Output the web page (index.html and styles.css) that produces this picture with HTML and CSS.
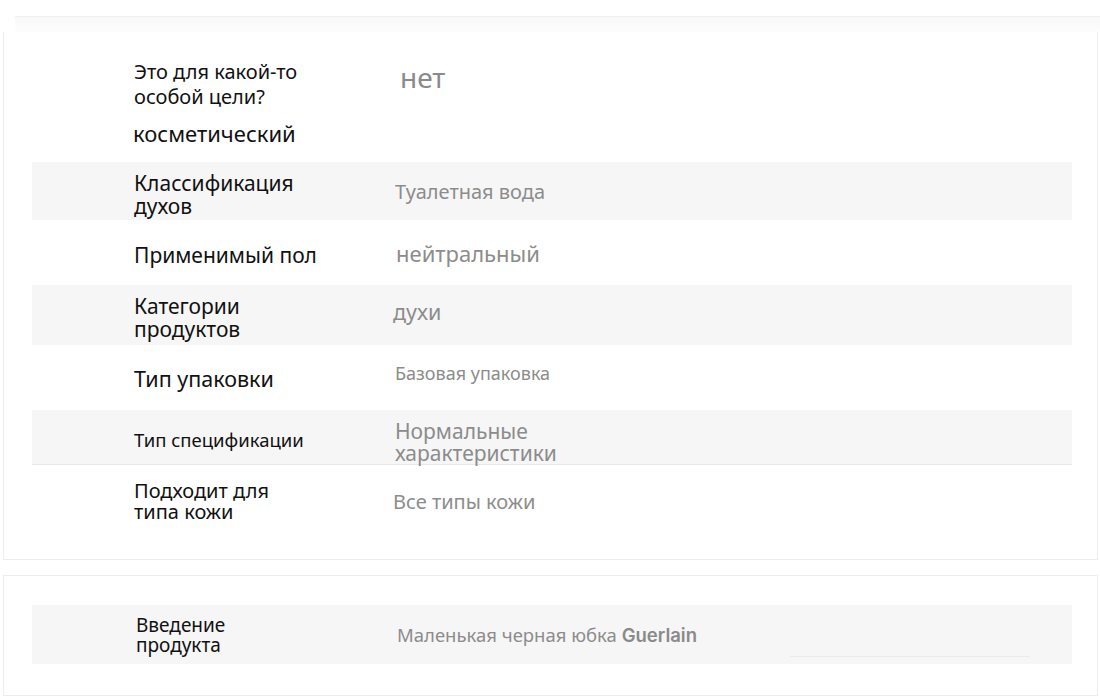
FILE: index.html
```html
<!DOCTYPE html>
<html lang="ru">
<head>
<meta charset="utf-8">
<link rel="stylesheet" href="styles.css">
</head>
<body>
<div class="topbar"></div>
<section class="card card-main">
  <div class="row r1">
    <div class="label">Это для какой-то<br>особой цели?</div>
    <div class="value">нет</div>
  </div>
  <div class="extra">косметический</div>
  <div class="row band r2">
    <div class="label">Классификация<br>духов</div>
    <div class="value">Туалетная вода</div>
  </div>
  <div class="row r3">
    <div class="label">Применимый пол</div>
    <div class="value">нейтральный</div>
  </div>
  <div class="row band r4">
    <div class="label">Категории<br>продуктов</div>
    <div class="value">духи</div>
  </div>
  <div class="row r5">
    <div class="label">Тип упаковки</div>
    <div class="value">Базовая упаковка</div>
  </div>
  <div class="row band r6">
    <div class="label">Тип спецификации</div>
    <div class="value">Нормальные<br>характеристики</div>
  </div>
  <div class="row r7">
    <div class="label">Подходит для<br>типа кожи</div>
    <div class="value">Все типы кожи</div>
  </div>
</section>
<section class="card card-intro">
  <div class="row band r8">
    <div class="label">Введение<br>продукта</div>
    <div class="value">Маленькая черная юбка <span class="brand">Guerlain</span></div>
    <div class="underline"></div>
  </div>
</section>
</body>
</html>
```
FILE: styles.css
```css
html, body {
  margin: 0;
  padding: 0;
  background: #ffffff;
}
body {
  font-family: "Noto Sans", "Open Sans", "DejaVu Sans", sans-serif;
  color: #111111;
  width: 1100px;
  height: 698px;
  overflow: hidden;
}
.topbar {
  margin-top: 16px;
  margin-left: 15px;
  height: 15px;
  border-top: 1px solid #efefef;
  background: linear-gradient(#f8f8f8, #fdfdfd);
}
.card {
  margin-left: 3px;
  width: 1095px;
  border: 1px solid #ededed;
  box-sizing: border-box;
}
.card-main {
  border-top: none;
  height: 528px;
}
.card-intro {
  margin-top: 15px;
  height: 121px;
  padding-top: 29px;
}
.row {
  position: relative;
  display: flex;
  align-items: flex-start;
  margin-left: 28px;
  width: 1040px;
  padding-left: 102px;
  box-sizing: border-box;
}
.band {
  background: #f6f6f6;
}
.label {
  width: 261px;
  flex: none;
  color: #111111;
}
.value {
  color: #8c8c8c;
}

/* row 1 */
.r1 { height: 87px; }
.r1 .label { font-size: 20px; line-height: 25px; padding-top: 27px; }
.r1 .value { font-size: 28px; line-height: 32px; padding-top: 29px; padding-left: 5px; color: #8a8a8a; }

.extra {
  margin-left: 129px;
  font-size: 22px;
  line-height: 28px;
  height: 43px;
  color: #111111;
}

/* row 2 */
.r2 { height: 58px; }
.r2 .label { font-size: 21px; line-height: 23px; padding-top: 10px; }
.r2 .value { font-size: 20px; line-height: 26px; padding-top: 17px; }

/* row 3 */
.r3 { height: 65px; }
.r3 .label { font-size: 21px; line-height: 28px; padding-top: 21px; }
.r3 .value { font-size: 22px; line-height: 28px; padding-top: 19px; padding-left: 1px; }

/* row 4 */
.r4 { height: 60px; }
.r4 .label { font-size: 21px; line-height: 23px; padding-top: 10px; }
.r4 .value { font-size: 21.5px; line-height: 28px; padding-top: 13px; margin-left: -2px; }

/* row 5 */
.r5 { height: 65px; }
.r5 .label { font-size: 21.5px; line-height: 28px; padding-top: 20px; }
.r5 .value { font-size: 18px; line-height: 24px; padding-top: 16px; }

/* row 6 */
.r6 { height: 55px; border-bottom: 1px solid #e8e8e8; }
.r6 .label { font-size: 18.5px; line-height: 24px; padding-top: 18px; }
.r6 .value { font-size: 21px; line-height: 22px; padding-top: 10px; }

/* row 7 */
.r7 { height: 75px; }
.r7 .label { font-size: 20px; line-height: 21px; padding-top: 15px; }
.r7 .value { font-size: 20px; line-height: 26px; padding-top: 24px; margin-left: -2px; }

/* intro row */
.r8 { height: 59px; }
.r8 .label { font-size: 19px; line-height: 20px; padding-top: 10px; padding-left: 2px; }
.r8 .value { font-size: 18.5px; line-height: 24px; padding-top: 18px; }

.brand {
  font-family: "Inter", "Lato", sans-serif;
  font-weight: 600;
  color: #8a8a8a;
}
.underline {
  position: absolute;
  left: 758px;
  top: 51px;
  width: 240px;
  height: 1px;
  background: #ebebeb;
}
```
